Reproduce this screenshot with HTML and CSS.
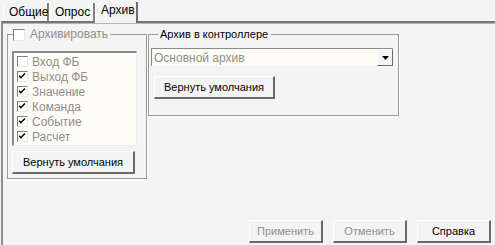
FILE: index.html
```html
<!DOCTYPE html>
<html>
<head>
<meta charset="utf-8">
<link rel="stylesheet" href="styles.css">
</head>
<body>
<div class="tabs">
  <div class="tab">Общие</div>
  <div class="tab">Опрос</div>
  <div class="tab active">Архив</div>
</div>
<div class="panel">
  <div class="content">
    <fieldset class="group group-left">
      <legend class="legend">
        <span class="check big"></span>
        <span class="dis">Архивировать</span>
      </legend>
      <div class="listbox">
        <div class="item"><span class="check"></span><span class="dis">Вход ФБ</span></div>
        <div class="item"><span class="check on"><svg viewBox="0 0 11 11" width="11" height="11"><polyline points="1.5,4.5 3.5,7 8.5,1.8" fill="none" stroke="#000" stroke-width="1.8"/></svg></span><span class="dis">Выход ФБ</span></div>
        <div class="item"><span class="check on"><svg viewBox="0 0 11 11" width="11" height="11"><polyline points="1.5,4.5 3.5,7 8.5,1.8" fill="none" stroke="#000" stroke-width="1.8"/></svg></span><span class="dis">Значение</span></div>
        <div class="item"><span class="check on"><svg viewBox="0 0 11 11" width="11" height="11"><polyline points="1.5,4.5 3.5,7 8.5,1.8" fill="none" stroke="#000" stroke-width="1.8"/></svg></span><span class="dis">Команда</span></div>
        <div class="item"><span class="check on"><svg viewBox="0 0 11 11" width="11" height="11"><polyline points="1.5,4.5 3.5,7 8.5,1.8" fill="none" stroke="#000" stroke-width="1.8"/></svg></span><span class="dis">Событие</span></div>
        <div class="item"><span class="check on"><svg viewBox="0 0 11 11" width="11" height="11"><polyline points="1.5,4.5 3.5,7 8.5,1.8" fill="none" stroke="#000" stroke-width="1.8"/></svg></span><span class="dis">Расчет</span></div>
      </div>
      <div class="btn btn-left">Вернуть умолчания</div>
    </fieldset>
    <fieldset class="group group-right">
      <legend class="legend">Архив в контроллере</legend>
      <div class="combo">
        <span class="combo-text dis">Основной архив</span>
        <span class="combo-btn"><svg viewBox="0 0 7 4" width="7" height="4"><polygon points="0,0 7,0 3.5,4" fill="#000"/></svg></span>
      </div>
      <div class="btn btn-right">Вернуть умолчания</div>
    </fieldset>
  </div>
  <div class="footer">
    <div class="btn btn-foot dis">Применить</div>
    <div class="btn btn-foot dis">Отменить</div>
    <div class="btn btn-foot">Справка</div>
  </div>
</div>
</body>
</html>
```
FILE: styles.css
```css
html, body {
  margin: 0;
  padding: 0;
}
body {
  width: 495px;
  height: 245px;
  background: #f4f4f4;
  font-family: "Liberation Sans", Arial, sans-serif;
  font-size: 12px;
  color: #000;
  overflow: hidden;
  display: flex;
  flex-direction: column;
}
.dis {
  color: #8e8e8e;
}
.tabs {
  display: flex;
  height: 21px;
  padding-left: 3px;
  align-items: flex-end;
}
.tab {
  height: 18px;
  box-sizing: border-box;
  padding: 3px 0 0 5px;
  border-left: 1px solid #ffffff;
  border-right: 2px solid #808080;
  line-height: 13px;
}
.tab:nth-child(1) { width: 46px; }
.tab:nth-child(2) { width: 46px; }
.tab.active {
  width: 43px;
  height: 21px;
  padding-top: 2px;
  margin-bottom: -2px;
  position: relative;
  z-index: 1;
  background: #f4f4f4;
  border-right-color: #6e6e6e;
}
.panel {
  flex: 1;
  margin-left: 1px;
  border-top: 2px solid #767676;
  border-left: 2px solid #8e8e8e;
  box-shadow: inset 0 1px 0 #b4b4b4;
  display: flex;
  flex-direction: column;
}
.content {
  display: flex;
  gap: 1px;
  padding: 5px 0 0 4px;
  align-items: flex-start;
}
.group {
  margin: 0;
  min-width: 0;
  border: 1px solid #9a9a9a;
  box-shadow: 1px 1px 0 #ffffff;
  box-sizing: border-box;
}
.legend {
  padding: 0 2px 0 0;
  margin-left: 0;
  line-height: 13px;
  height: 13px;
  display: flex;
  align-items: center;
  gap: 5px;
}
.group-left {
  width: 140px;
  padding: 10px 4px 4px 4px;
}
.group-left .legend {
  margin-left: 1px;
}
.group-right {
  width: 251px;
  padding: 7px 5px 16px 2px;
}
.group-right .legend {
  margin-left: 7px;
  padding: 0 3px 0 2px;
  font-size: 11px;
}
.check {
  width: 11px;
  height: 11px;
  box-sizing: border-box;
  background: #ffffff;
  border-top: 1px solid #808080;
  border-left: 1px solid #808080;
  border-right: 1px solid #e8e8e8;
  border-bottom: 1px solid #e8e8e8;
  display: inline-flex;
  align-items: center;
  justify-content: center;
  flex: none;
}
.check svg {
  display: block;
  width: 9px;
  height: 9px;
}
.check.big {
  width: 12px;
  height: 12px;
}
.listbox {
  width: 125px;
  height: 95px;
  box-sizing: border-box;
  background: #fdfdf6;
  border-top: 2px solid #8a8a8a;
  border-left: 2px solid #8a8a8a;
  border-right: 1px solid #ececec;
  border-bottom: 1px solid #ececec;
  padding: 1px 0 0 3px;
}
.item {
  height: 15px;
  display: flex;
  align-items: center;
  gap: 4px;
}
.btn {
  box-sizing: border-box;
  height: 23px;
  border-top: 1px solid #ffffff;
  border-left: 1px solid #ffffff;
  border-right: 2px solid #6a6a6a;
  border-bottom: 2px solid #6a6a6a;
  background: #f4f4f4;
  display: flex;
  align-items: center;
  justify-content: center;
  padding-bottom: 1px;
  font-size: 11px;
}
.btn-left {
  width: 123px;
  margin-top: 5px;
}
.combo {
  width: 242px;
  height: 18px;
  box-sizing: border-box;
  background: #fdfdf6;
  border-top: 1px solid #8a8a8a;
  border-left: 1px solid #8a8a8a;
  display: flex;
  align-items: center;
  justify-content: space-between;
  padding-left: 2px;
}
.combo-btn {
  width: 16px;
  height: 17px;
  box-sizing: border-box;
  background: #f4f4f4;
  border-top: 1px solid #ffffff;
  border-left: 1px solid #ffffff;
  border-right: 1px solid #6a6a6a;
  border-bottom: 1px solid #6a6a6a;
  display: flex;
  align-items: center;
  justify-content: center;
}
.combo-btn svg {
  display: block;
}
.btn-right {
  width: 121px;
  margin-top: 10px;
  margin-left: 3px;
}
.footer {
  margin-top: auto;
  display: flex;
  justify-content: flex-end;
  gap: 10px;
  padding: 0 4px 2px 0;
}
.btn-foot {
  width: 74px;
}
```
